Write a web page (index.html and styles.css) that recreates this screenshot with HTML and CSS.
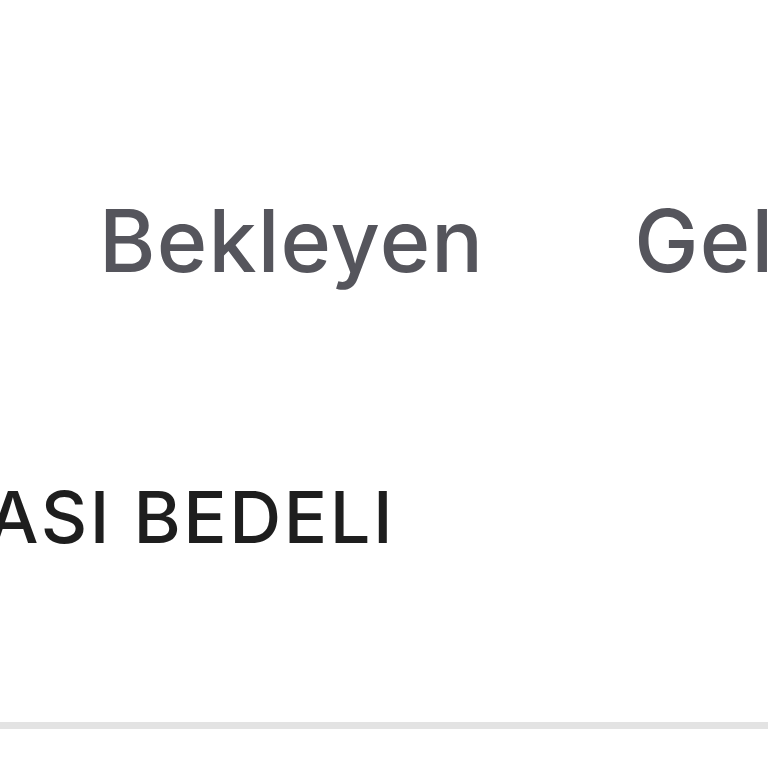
FILE: index.html
```html
<!DOCTYPE html>
<html lang="tr">
<head>
    <meta charset="UTF-8">
    <meta name="viewport" content="width=device-width, initial-scale=1.0">
    <title>Ödemeler</title>
    <link rel="stylesheet" href="styles.css">
</head>
<body>
    <div class="page">
        <div class="tabs">
            <span class="tab">Bekleyen</span>
            <span class="tab">Gelecek</span>
        </div>
        <div class="item">
            <div class="item-title"><span>ODASI BEDELI</span></div>
        </div>
        <div class="divider"></div>
    </div>
</body>
</html>
```
FILE: styles.css
```css
html{
    background-color: #fff;
}
body{
    margin: 0;
    font-family: Inter, "Noto Sans", sans-serif;
    overflow: hidden;
}
.page{
    width: 768px;
    height: 768px;
    overflow: hidden;
}
.tabs{
    display: flex;
    gap: 150px;
    padding-left: 99px;
    padding-top: 186px;
    white-space: nowrap;
}
.tab{
    font-size: 86px;
    font-weight: 500;
    line-height: 110px;
    letter-spacing: 1.2px;
    color: #55555c;
}
.item{
    padding-top: 176px;
}
.item-title{
    display: flex;
    justify-content: flex-end;
    width: 395px;
    overflow: hidden;
    white-space: nowrap;
    font-size: 72px;
    font-weight: 500;
    line-height: 90px;
    letter-spacing: 2.5px;
    color: #1e1e1e;
}
.divider{
    margin-top: 160px;
    height: 7px;
    background-color: #e3e3e3;
}
```
